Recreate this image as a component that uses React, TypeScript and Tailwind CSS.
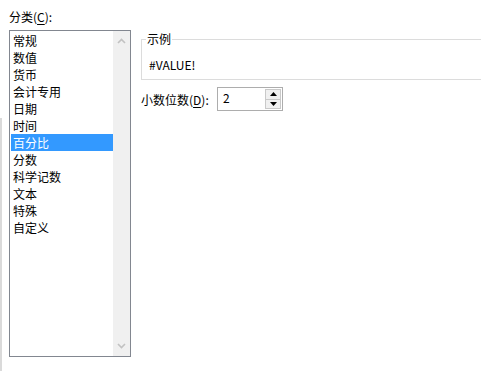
const items = ["常规", "数值", "货币", "会计专用", "日期", "时间", "百分比", "分数", "科学记数", "文本", "特殊", "自定义"];

const Chevron = ({ up }: { up?: boolean }) => (
    <svg width="9" height="6" viewBox="0 0 9 6" className="block">
        <path
            d={up ? "M1 5 L4.5 1.5 L8 5" : "M1 1 L4.5 4.5 L8 1"}
            fill="none"
            stroke="#c2c2c2"
            strokeWidth="1.6"
        />
    </svg>
);

const Tri = ({ up }: { up?: boolean }) => (
    <svg width="7" height="4" viewBox="0 0 7 4" className="block">
        <path d={up ? "M0 4 L3.5 0 L7 4 Z" : "M0 0 L3.5 4 L7 0 Z"} fill="#000" />
    </svg>
);

export default function App() {
    return (
        <div
            className="flex h-[371px] w-[481px] overflow-hidden bg-white text-[12px] text-black"
            style={{ fontFamily: '"Noto Sans CJK SC", "Noto Sans", sans-serif' }}
        >
            {/* window edge */}
            <div className="flex w-[2px] flex-col">
                <div className="h-[118px]" />
                <div className="flex-1 bg-[#dadada]" />
            </div>
            <div className="flex flex-col pl-[7px] pt-[8px]">
                <div className="h-[22px] leading-[17px]">
                    分类(<span className="underline underline-offset-2">C</span>):
                </div>
                <div className="flex h-[327px] w-[122px] border border-[#828790] bg-white">
                    <ul className="flex-1 pl-px pt-px">
                        {items.map((it, i) => (
                            <li
                                key={it}
                                className={
                                    i === 6
                                        ? "h-[17px] bg-[#3399ff] pl-[2px] leading-[17px] text-white"
                                        : "h-[17px] pl-[2px] leading-[17px]"
                                }
                            >
                                {it}
                            </li>
                        ))}
                    </ul>
                    <div className="flex w-[17px] flex-col items-center justify-between bg-[#f0f0f0] py-[7px]">
                        <Chevron up />
                        <Chevron />
                    </div>
                </div>
            </div>
            <div className="flex flex-1 flex-col pl-[10px] pt-[39px]">
                <div className="flex h-[41px] flex-col border-y border-l border-[#dcdcdc]">
                    <div className="-mt-[10px] ml-[4px] w-fit bg-white px-px leading-[17px]">示例</div>
                    <div className="mt-[9px] pl-[7px] leading-[17px]">#VALUE!</div>
                </div>
                <div className="mt-[7px] flex items-center">
                    <div className="w-[76px] leading-[17px]">
                        小数位数(<span className="underline underline-offset-2">D</span>):
                    </div>
                    <div className="flex h-[24px] w-[66px] items-stretch border border-[#adadad] bg-white">
                        <div className="flex-1 pl-[5px] leading-[20px]">2</div>
                        <div className="flex w-[17px] flex-col py-px pr-px">
                            <div className="flex flex-1 items-center justify-center border border-[#c9c9c9] bg-[#f0f0f0]">
                                <Tri up />
                            </div>
                            <div className="flex flex-1 items-center justify-center border border-t-0 border-[#c9c9c9] bg-[#f0f0f0]">
                                <Tri />
                            </div>
                        </div>
                    </div>
                </div>
            </div>
        </div>
    );
}
